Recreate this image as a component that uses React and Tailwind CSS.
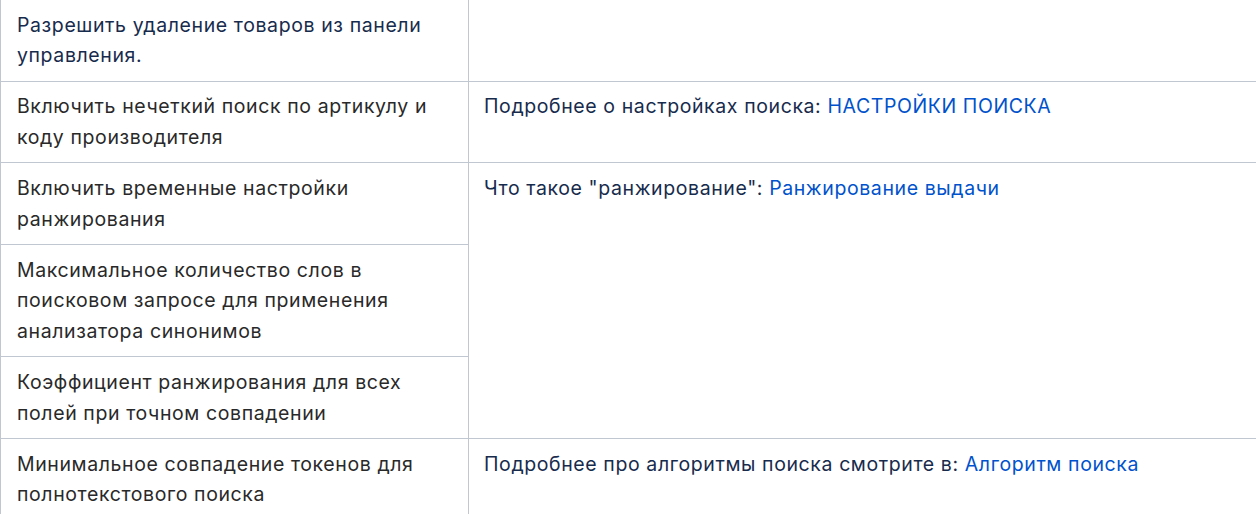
import React from "react";

const L = "border-l border-r border-b border-[#c1c7d0] pl-[16px] pr-[12px] py-[9.75px]";
const R = "border-b border-[#c1c7d0] pl-[15px] pr-[12px] py-[9.75px]";
const link = "text-[#0052cc]";

export default function App() {
  return (
    <div
      className="w-[1256px] h-[514px] overflow-hidden bg-white text-[19.5px] leading-[30.6px] tracking-[0.6px]"
      style={{ fontFamily: "Inter, 'Noto Sans', sans-serif" }}
    >
      <div className="grid grid-cols-[469px_1fr]">
        <div className={`${L} text-[#172b4d]`}>
          Разрешить удаление товаров из панели управления.
        </div>
        <div className={R}></div>

        <div className={`${L} text-[#292929]`}>
          Включить нечеткий поиск по артикулу и коду производителя
        </div>
        <div className={`${R} text-[#172b4d]`}>
          Подробнее о настройках поиска: <span className={link}>НАСТРОЙКИ ПОИСКА</span>
        </div>

        <div className={`${L} text-[#292929]`}>
          Включить временные настройки ранжирования
        </div>
        <div className={`${R} row-span-3 text-[#172b4d]`}>
          Что такое "ранжирование": <span className={link}>Ранжирование выдачи</span>
        </div>
        <div className={`${L} text-[#292929]`}>
          Максимальное количество слов в поисковом запросе для применения анализатора синонимов
        </div>
        <div className={`${L} text-[#292929]`}>
          Коэффициент ранжирования для всех полей при точном совпадении
        </div>

        <div className={`${L} text-[#292929]`}>
          Минимальное совпадение токенов для полнотекстового поиска
        </div>
        <div className={`${R} text-[#172b4d]`}>
          Подробнее про алгоритмы поиска смотрите в: <span className={link}>Алгоритм поиска</span>
        </div>
      </div>
    </div>
  );
}
